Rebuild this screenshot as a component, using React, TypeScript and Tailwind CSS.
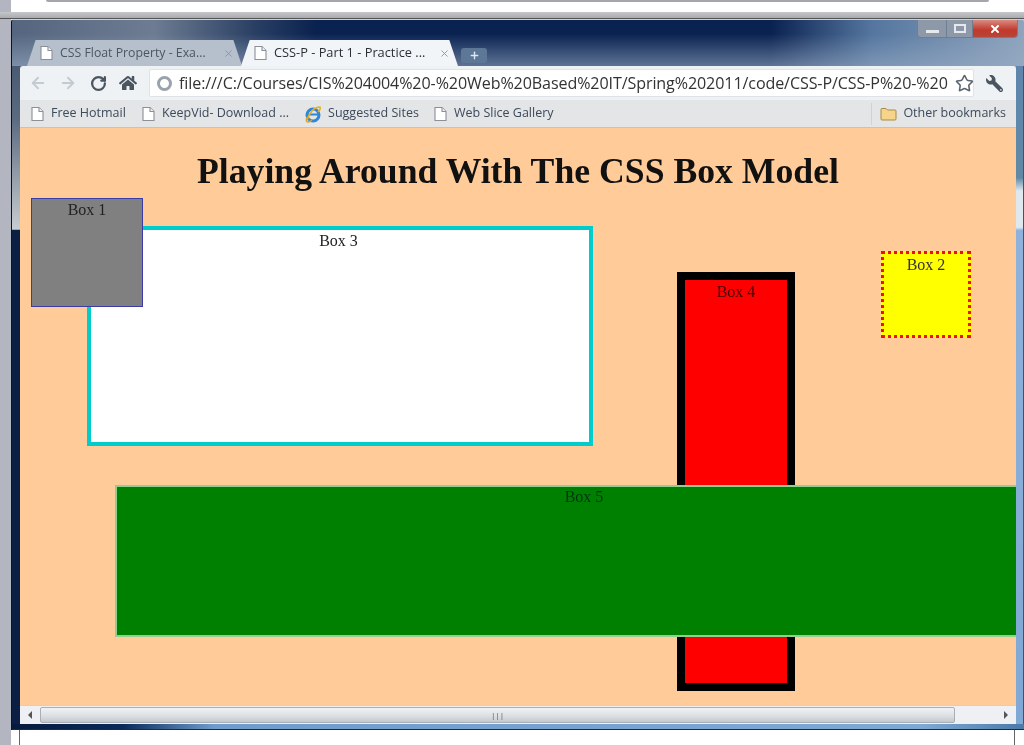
import { ArrowLeft, ArrowRight, RotateCw, Star, Plus, X } from 'lucide-react';
import { FaHome, FaWrench } from 'react-icons/fa';

function PageIcon() {
  return (
    <svg width="15" height="16" viewBox="0 0 15 16" className="shrink-0">
      <path d="M2 1.5h7l4 4v9H2z" fill="#fff" stroke="#8a8f98" strokeWidth="1.1" />
      <path d="M9 1.5v4h4" fill="#eef0f3" stroke="#8a8f98" strokeWidth="1.1" />
    </svg>
  );
}

function IeIcon() {
  return (
    <svg width="18" height="18" viewBox="0 0 18 18" className="shrink-0">
      <circle cx="9" cy="10" r="6" fill="none" stroke="#2f86d6" strokeWidth="3" />
      <path d="M4 9.5h10" stroke="#2f86d6" strokeWidth="2" />
      <path d="M3 15C5 8 10 2 16 2c1 2-1 4-2 5" fill="none" stroke="#e8b21f" strokeWidth="1.6" />
      <path d="M3 12c-1 3-1 5 1 5 1 0 3-1 4-2" fill="none" stroke="#e0a020" strokeWidth="1.4" />
    </svg>
  );
}

function Bookmark({ label, icon }: { label: string; icon?: React.ReactNode }) {
  return (
    <div className="flex items-center gap-[6px]">
      {icon ?? <PageIcon />}
      <span className="text-[12.5px] text-[#3c4a5c] whitespace-nowrap">{label}</span>
    </div>
  );
}

function PageBoxes() {
  return (
    <div className="relative flex-1 bg-[#ffcc99] overflow-hidden font-['Liberation_Serif',serif] text-black">
      <h1 className="absolute left-0 top-[24px] w-[996px] text-center text-[35.7px] leading-[38px] font-bold text-[#111] whitespace-nowrap">
        Playing Around With The CSS Box Model
      </h1>

      {/* Box 3 */}
      <div className="absolute left-[67px] top-[98px] w-[506px] h-[220px] pr-[3px] bg-white border-4 border-[#00cccc] text-center text-[16px] leading-[22px] text-[#222]">
        Box 3
      </div>
      {/* Box 1 */}
      <div className="absolute left-[11px] top-[70px] w-[112px] h-[109px] bg-[#808080] border border-[#3c3ca8] text-center text-[16px] leading-[22px] text-[#222]">
        Box 1
      </div>
      {/* Box 2 */}
      <div className="absolute left-[861px] top-[123px] w-[90px] h-[87px] bg-[#ffff00] border-[3px] border-dotted border-[#ee1111] text-center text-[16px] leading-[22px] text-[#333]">
        Box 2
      </div>
      {/* Box 4 */}
      <div className="absolute left-[657px] top-[144px] w-[118px] h-[419px] bg-[#ff0000] border-8 border-black text-center text-[16px] leading-[24px] text-[#400]">
        Box 4
      </div>
      {/* Box 5 */}
      <div className="absolute left-[95px] top-[357px] w-[1000px] h-[152px] bg-[#008000] border-2 border-[#8fd08f] text-center text-[16px] leading-[20px] text-[#031]">
        <span className="block w-[934px]">Box 5</span>
      </div>
    </div>
  );
}

export default function App() {
  return (
    <div className="w-[1024px] h-[745px] overflow-hidden bg-white flex flex-col font-['Open_Sans',sans-serif] blur-[0.4px]">
      {/* strip of the slide above the window */}
      <div className="h-[19px] flex flex-col shrink-0">
        <div className="h-[12px] bg-white flex">
          <div className="w-[11px] bg-[#b3b6c1]" />
          <div className="flex-1">
            <div className="h-[2px] mx-[35px] bg-[#a5a5ad] rounded-b" />
          </div>
        </div>
        <div className="h-[7px] bg-[linear-gradient(180deg,#c6c6c8_0%,#a9abb0_100%)] border-b border-[#555]" />
      </div>

      <div className="flex flex-1 min-h-0">
        <div className="w-[11px] bg-[#b3b6c1] shrink-0" />

        <div className="flex-1 flex flex-col min-w-0">
          {/* browser window */}
          <div className="h-[711px] flex flex-col rounded-t-[3px] border-l border-[#0b1320] bg-[linear-gradient(90deg,#55657f_0%,#6d7c92_14%,#2a3f63_24%,#0a2250_30%,#0a2250_75%,#55769f_85%,#8fa4bd_100%)]">
            <div className="h-px shrink-0 bg-[#c8d0da]" />
            {/* tab strip */}
            <div className="relative h-[46px] shrink-0 flex items-end pl-[15px] bg-[linear-gradient(180deg,rgba(255,255,255,0)_30%,rgba(150,170,195,0.6)_100%)]">
              <div className="w-[215px] h-[26px] flex items-center gap-[6px] pl-[12px] pr-[8px] rounded-t-[5px] bg-[#b6c0cd] [clip-path:polygon(0_100%,4%_0,96%_0,100%_100%)]">
                <PageIcon />
                <span className="flex-1 text-[12.3px] text-[#4c5561] whitespace-nowrap">CSS Float Property - Exa...</span>
                <X size={11} className="text-[#8b94a0]" />
              </div>
              <div className="w-[217px] -ml-[1px] h-[26px] flex items-center gap-[6px] pl-[12px] pr-[8px] rounded-t-[5px] bg-[#f2f5f8] [clip-path:polygon(0_100%,4%_0,96%_0,100%_100%)]">
                <PageIcon />
                <span className="flex-1 text-[12.8px] text-[#2b3036] whitespace-nowrap">CSS-P - Part 1 - Practice ...</span>
                <X size={11} className="text-[#8b94a0]" />
              </div>
              <div className="ml-[3px] mb-[3px] w-[26px] h-[15px] flex items-center justify-center rounded-[3px] bg-[#5d7797]">
                <Plus size={11} strokeWidth={3} className="text-[#dfe7f0]" />
              </div>
              {/* window buttons */}
              <div className="absolute right-[6px] top-0 w-[101px] h-[18px] flex rounded-b-[4px] border border-t-0 border-[#6e7f94] overflow-hidden">
                <div className="w-[28px] flex items-center justify-center bg-[#8d98a8]">
                  <div className="w-[13px] h-[3px] bg-[#e5e9ee] mt-[5px]" />
                </div>
                <div className="w-[26px] flex items-center justify-center bg-[#8d98a8] border-l border-[#6e7f94]">
                  <div className="w-[12px] h-[9px] border-2 border-[#e5e9ee]" />
                </div>
                <div className="flex-1 flex items-center justify-center bg-[linear-gradient(180deg,#d98a80_0%,#c0392b_60%,#b8453a_100%)] border-l border-[#6e7f94]">
                  <X size={12} strokeWidth={4} className="text-white" />
                </div>
              </div>
            </div>

            {/* body with side frame */}
            <div className="flex-1 flex min-h-0">
              <div className="w-[8px] shrink-0 bg-[linear-gradient(180deg,#4a5a72_0%,#5a6a80_8%,#c8ccd0_24.8%,#0b1f45_25%,#0b1f45_100%)]" />
              <div className="flex-1 flex flex-col min-w-0">
                {/* toolbar */}
                <div className="h-[34px] shrink-0 flex items-center pl-[9px] rounded-t-[3px] bg-[#eff2f5]">
                  <ArrowLeft size={18} strokeWidth={2.5} className="text-[#c4cad1]" />
                  <ArrowRight size={18} strokeWidth={2.5} className="ml-[12px] text-[#c4cad1]" />
                  <RotateCw size={17} strokeWidth={3.2} className="ml-[13px] text-[#4a5560]" />
                  <FaHome size={18} className="ml-[12px] text-[#4a5560]" />
                  <div className="ml-[12px] w-[825px] h-[28px] flex items-center gap-[7px] pl-[7px] bg-white rounded-[2px] border border-[#dfe3e8] overflow-hidden">
                    <div className="w-[15px] h-[15px] rounded-full border-[3px] border-[#9aa3ad] shrink-0" />
                    <span className="text-[16.08px] text-[#333] whitespace-nowrap tracking-[-0.1px]">
                      file:///C:/Courses/CIS%204004%20-%20Web%20Based%20IT/Spring%202011/code/CSS-P/CSS-P%20-%20
                    </span>
                    <Star size={19} className="ml-auto mr-[3px] shrink-0 text-[#5b6670]" />
                  </div>
                  <FaWrench size={17} className="ml-[12px] -scale-x-100 text-[#4a5560]" />
                </div>

                {/* bookmarks bar */}
                <div className="h-[28px] shrink-0 flex items-center pl-[10px] pr-[10px] bg-[#e3e5e7] border-b border-[#d3c0a8]">
                  <Bookmark label="Free Hotmail" />
                  <div className="w-[15px]" />
                  <Bookmark label="KeepVid- Download ..." />
                  <div className="w-[15px]" />
                  <Bookmark label="Suggested Sites" icon={<IeIcon />} />
                  <div className="w-[14px]" />
                  <Bookmark label="Web Slice Gallery" />
                  <div className="ml-auto h-[22px] w-px bg-[#d0d3d6] mr-[8px]" />
                  <Bookmark
                    label="Other bookmarks"
                    icon={
                      <svg width="17" height="15" viewBox="0 0 17 15">
                        <path d="M1 3.5a1 1 0 0 1 1-1h4l1.5 1.5H15a1 1 0 0 1 1 1V13a1 1 0 0 1-1 1H2a1 1 0 0 1-1-1z" fill="#f6d58a" stroke="#a98a45" />
                      </svg>
                    }
                  />
                </div>

                <PageBoxes />

                {/* horizontal scrollbar */}
                <div className="h-[19px] shrink-0 flex items-center bg-[#eef0f4] border-t border-[#d8cfc8]">
                  <div className="w-[20px] flex justify-center">
                    <div className="w-0 h-0 border-y-[4px] border-y-transparent border-r-[4px] border-r-[#555]" />
                  </div>
                  <div className="w-[915px] h-[16px] flex items-center justify-center rounded-[2px] border border-[#a9afb7] bg-[linear-gradient(180deg,#f0f2f4_0%,#dfe2e5_50%,#c4c8cd_100%)]">
                    <span className="text-[8px] leading-none text-[#555]">|||</span>
                  </div>
                  <div className="flex-1 flex justify-end pr-[8px]">
                    <div className="w-0 h-0 border-y-[4px] border-y-transparent border-l-[4px] border-l-[#555]" />
                  </div>
                </div>
              </div>
              <div className="w-[8px] shrink-0 border-r border-[#3a5570] bg-[linear-gradient(180deg,#5f85ad_0%,#5f8aa5_17%,#dfe8ef_19%,#dfe8ef_24.5%,#8fb2dc_25%,#7fa8d4_100%)]" />
            </div>
            <div className="h-[6px] shrink-0 border-b border-[#1a2a40] bg-[linear-gradient(90deg,#071a3d_0%,#0a2a5a_11%,#6f9ccc_20%,#7fa8d4_90%,#4a7aa8_100%)]" />
          </div>

          {/* slide below the window */}
          <div className="flex-1 ml-[8px] mr-[9px] border-x border-[#666] bg-white" />
        </div>
      </div>
    </div>
  );
}
